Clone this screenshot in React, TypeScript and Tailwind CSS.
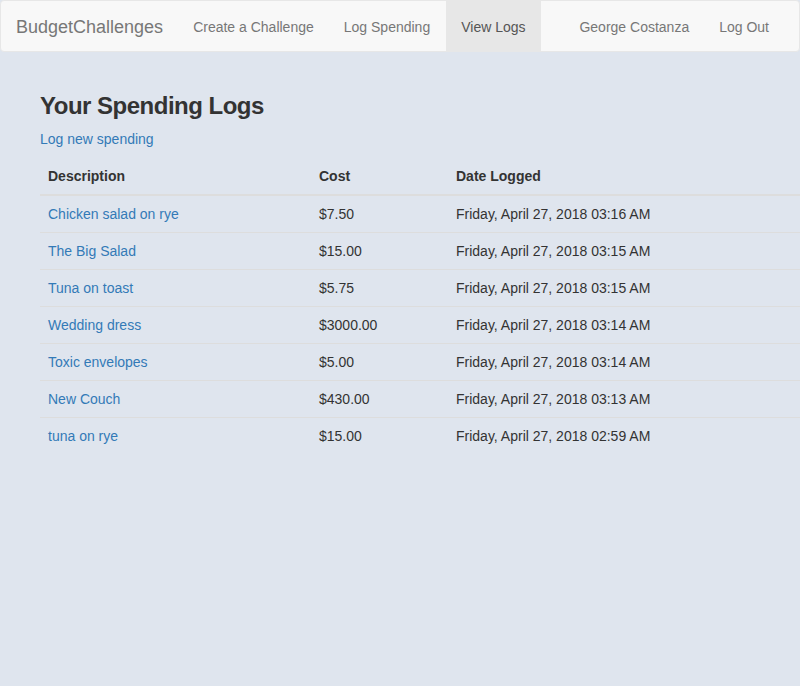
import React from "react";

const logs = [
  { desc: "Chicken salad on rye", cost: "$7.50", date: "Friday, April 27, 2018 03:16 AM" },
  { desc: "The Big Salad", cost: "$15.00", date: "Friday, April 27, 2018 03:15 AM" },
  { desc: "Tuna on toast", cost: "$5.75", date: "Friday, April 27, 2018 03:15 AM" },
  { desc: "Wedding dress", cost: "$3000.00", date: "Friday, April 27, 2018 03:14 AM" },
  { desc: "Toxic envelopes", cost: "$5.00", date: "Friday, April 27, 2018 03:14 AM" },
  { desc: "New Couch", cost: "$430.00", date: "Friday, April 27, 2018 03:13 AM" },
  { desc: "tuna on rye", cost: "$15.00", date: "Friday, April 27, 2018 02:59 AM" },
];

const App = () => {
  return (
    <div className="min-h-[686px] bg-[#dfe5ee] text-[14px] leading-[20px] text-[#333] font-['Liberation_Sans',Arial,sans-serif]">
      <nav className="h-[52px] bg-[#f8f8f8] border border-[#e7e7e7] rounded-[4px] flex items-stretch px-[15px]">
        <a className="flex items-center h-[50px] pt-[1px] pr-[15px] text-[18px] text-[#777]">BudgetChallenges</a>
        <ul className="flex">
          <li className="flex items-center pt-[1px] px-[15px] text-[#777]">Create a Challenge</li>
          <li className="flex items-center pt-[1px] px-[15px] text-[#777]">Log Spending</li>
          <li className="flex items-center pt-[1px] px-[15px] ml-[1px] text-[#555] bg-[#e7e7e7]">View Logs</li>
        </ul>
        <ul className="flex ml-auto">
          <li className="flex items-center pt-[1px] px-[15px] text-[#777]">George Costanza</li>
          <li className="flex items-center pt-[1px] px-[15px] text-[#777]">Log Out</li>
        </ul>
      </nav>

      <div className="pl-[40px] pt-[41px]">
        <h3 className="text-[24px] leading-[26px] font-bold text-[#333] tracking-[-0.5px]">Your Spending Logs</h3>
        <a className="block mt-[10px] text-[#337ab7]">Log new spending</a>
        <table className="mt-[9px] w-[760px] border-collapse text-left">
          <thead>
            <tr className="border-b-2 border-[#dddddd]">
              <th className="w-[271px] p-[8px] font-bold">Description</th>
              <th className="w-[137px] p-[8px] font-bold">Cost</th>
              <th className="p-[8px] font-bold">Date Logged</th>
            </tr>
          </thead>
          <tbody>
            {logs.map((log, idx) => (
              <tr key={idx} className={idx > 0 ? "border-t border-[#dddddd]" : ""}>
                <td className="p-[8px] text-[#337ab7]">{log.desc}</td>
                <td className="p-[8px]">{log.cost}</td>
                <td className="p-[8px]">{log.date}</td>
              </tr>
            ))}
          </tbody>
        </table>
      </div>
    </div>
  );
};

export default App;
